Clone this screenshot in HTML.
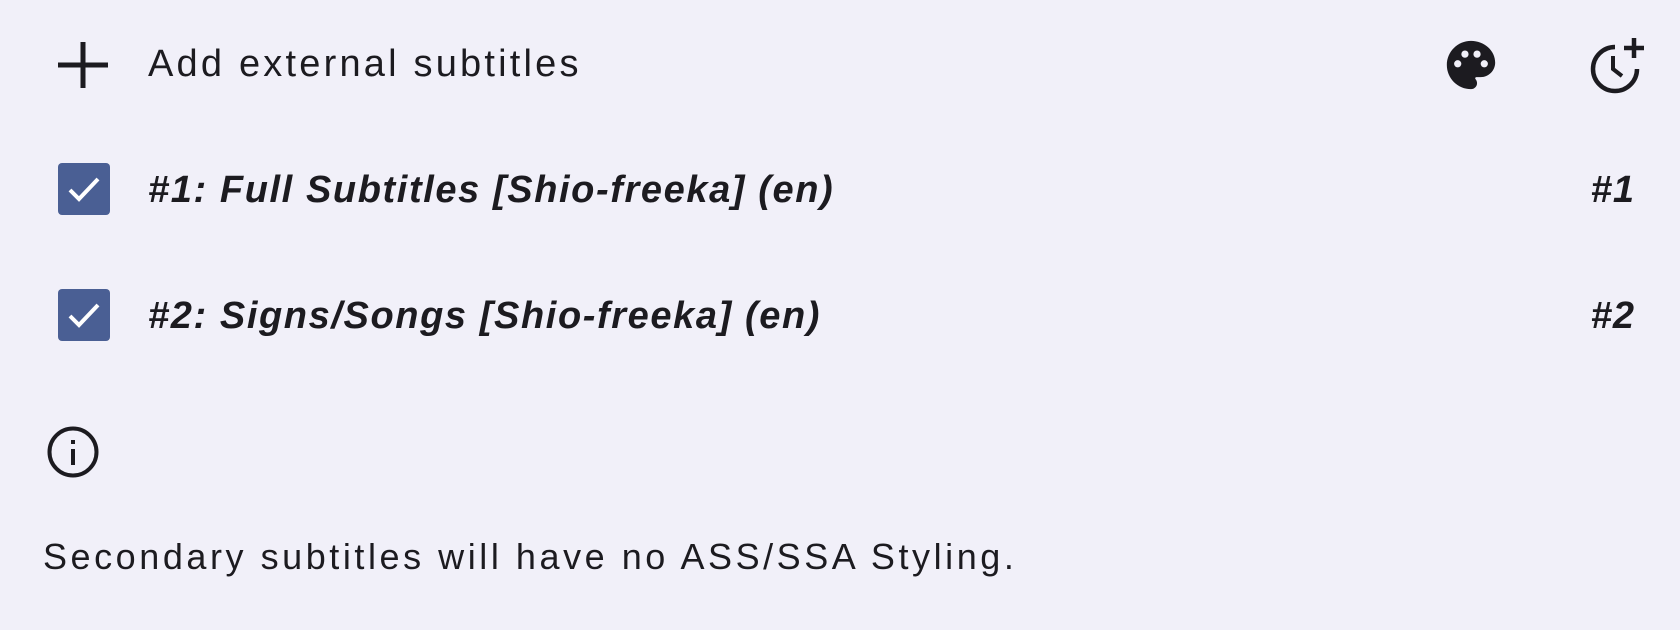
<!DOCTYPE html>
<html><head><meta charset="utf-8"><style>
html,body{margin:0;padding:0;}
body{width:1680px;height:630px;background:#f1f0f9;position:relative;overflow:hidden;font-family:"Liberation Sans",sans-serif;color:#1c1b20;}
.a{position:absolute;white-space:nowrap;}
.cb{position:absolute;left:58px;width:52px;height:52px;border-radius:4px;background:#4a5f94;}
.row{font-weight:bold;font-style:italic;font-size:38px;letter-spacing:1.6px;}
</style></head><body>
<svg class="a" style="left:56px;top:40px" width="54" height="50" viewBox="0 0 54 50"><path d="M27 2V48M2 25H52" stroke="#1c1b20" stroke-width="5"/></svg>
<div class="a" style="left:148px;top:42px;font-size:38px;letter-spacing:3.2px;line-height:44px;">Add external subtitles</div>

<svg class="a" style="left:1442px;top:36px" width="58" height="58" viewBox="0 0 24 24"><path fill="#1c1b20" d="M12 2C6.490 2 2 6.49 2 12s4.49 10 10 10a2.5 2.5 0 0 0 2.5-2.5c0-.61-.23-1.2-.64-1.67a.53.53 0 0 1-.13-.33c0-.28.22-.5.5-.5H16c3.310 0 6-2.69 6-6 0-4.96-4.49-9-10-9zm-5.5 11a1.5 1.5 0 1 1 0-3 1.5 1.5 0 0 1 0 3zm3-4a1.5 1.5 0 1 1 0-3 1.5 1.5 0 0 1 0 3zm5 0a1.5 1.5 0 1 1 0-3 1.5 1.5 0 0 1 0 3zm3 4a1.5 1.5 0 1 1 0-3 1.5 1.5 0 0 1 0 3z"/></svg>
<svg class="a" style="left:1588px;top:36px" width="64" height="60" viewBox="0 0 64 60"><path d="M49 33A22 22 0 1 1 27 11" fill="none" stroke="#1c1b20" stroke-width="4.5"/><path d="M25 20V33L34 40" fill="none" stroke="#1c1b20" stroke-width="4"/><path d="M46 2V22M36 12H56" stroke="#1c1b20" stroke-width="4.5"/></svg>

<div class="cb" style="top:163px"><svg width="52" height="52" viewBox="0 0 52 52"><path d="M12 27L21 36L40 16" fill="none" stroke="#fff" stroke-width="4"/></svg></div>
<div class="a row" style="left:148px;top:168px;line-height:44px;">#1: Full Subtitles [Shio-freeka] (en)</div>
<div class="a row" style="right:45px;top:168px;line-height:44px;letter-spacing:1px;">#1</div>

<div class="cb" style="top:289px"><svg width="52" height="52" viewBox="0 0 52 52"><path d="M12 27L21 36L40 16" fill="none" stroke="#fff" stroke-width="4"/></svg></div>
<div class="a row" style="left:148px;top:294px;line-height:44px;">#2: Signs/Songs [Shio-freeka] (en)</div>
<div class="a row" style="right:45px;top:294px;line-height:44px;letter-spacing:1px;">#2</div>

<svg class="a" style="left:46px;top:425px" width="54" height="54" viewBox="0 0 54 54"><circle cx="27" cy="27" r="23.5" fill="none" stroke="#1c1b20" stroke-width="4"/><rect x="25" y="24" width="4" height="16" fill="#1c1b20"/><rect x="25" y="15" width="4" height="4" fill="#1c1b20"/></svg>

<div class="a" style="left:43px;top:535px;font-size:36px;letter-spacing:3.55px;line-height:44px;">Secondary subtitles will have no ASS/SSA Styling.</div>
</body></html>
